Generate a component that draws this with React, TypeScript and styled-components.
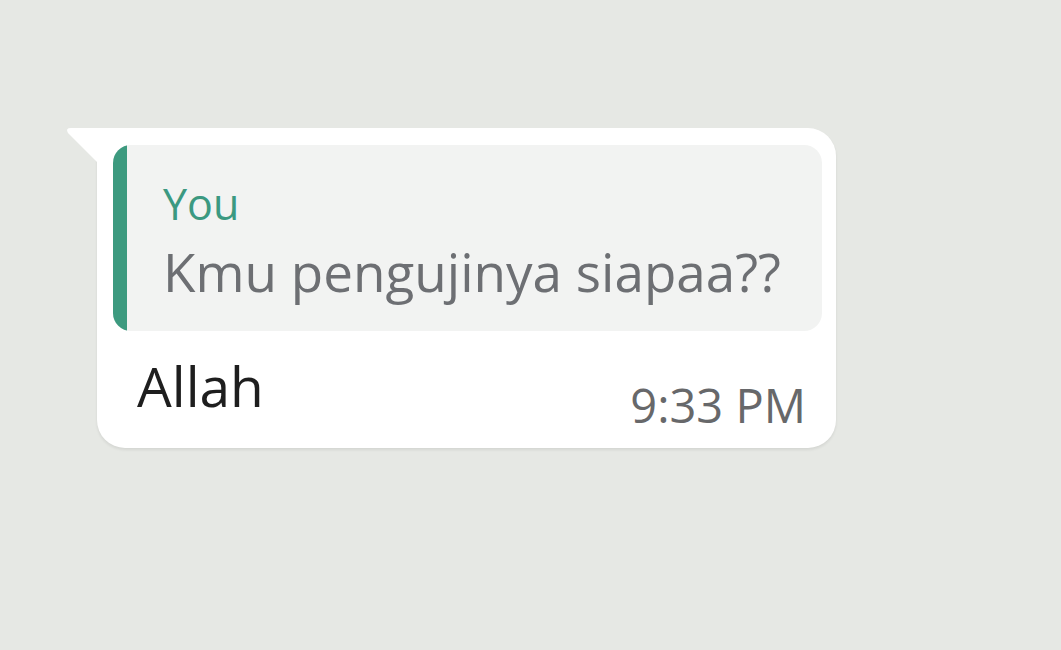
import React from "react";
import styled, { createGlobalStyle } from "styled-components";

const Global = createGlobalStyle`
  html, body { margin: 0; padding: 0; }
  body {
    background: #e6e8e4;
    font-family: "Open Sans", "Noto Sans", sans-serif;
    width: 1061px;
    height: 650px;
    overflow: hidden;
  }
`;

const Page = styled.div`
  width: 1061px;
  height: 650px;
  padding: 128px 0 0 97px;
  box-sizing: border-box;
`;

const Bubble = styled.div`
  position: relative;
  width: 739px;
  box-sizing: border-box;
  background: #ffffff;
  border-radius: 0 28px 28px 28px;
  padding: 17px 14px 15px 16px;
  box-shadow: 0 2px 3px rgba(0, 0, 0, 0.08);
`;

const Tail = styled.svg`
  position: absolute;
  left: -32px;
  top: 0;
  width: 34px;
  height: 36px;
`;

const Quote = styled.div`
  display: flex;
  background: #f2f3f2;
  border-radius: 18px;
  overflow: hidden;
  height: 186px;
`;

const Bar = styled.div`
  width: 14px;
  flex-shrink: 0;
  background: #3d9a7f;
  border-radius: 18px 0 0 18px;
`;

const QuoteBody = styled.div`
  display: flex;
  flex-direction: column;
  padding: 35px 0 0 36px;
`;

const Sender = styled.div`
  color: #3b9981;
  font-size: 43px;
  line-height: 48px;
`;

const Quoted = styled.div`
  color: #6d6f73;
  font-size: 53px;
  line-height: 60px;
  margin-top: 14px;
  white-space: nowrap;
`;

const Footer = styled.div`
  display: flex;
  justify-content: space-between;
  align-items: flex-start;
  padding: 23px 16px 0 24px;
`;

const Message = styled.div`
  color: #1e1e1e;
  font-size: 55px;
  line-height: 64px;
`;

const Time = styled.div`
  color: #67686a;
  font-size: 47px;
  line-height: 56px;
  margin-top: 23px;
`;

export default function App() {
  return (
    <>
      <Global />
      <Page>
        <Bubble>
          <Tail viewBox="0 0 34 36">
            <path d="M34 0 L6 0 Q0 0 3 5 L34 36 Z" fill="#ffffff" />
          </Tail>
          <Quote>
            <Bar />
            <QuoteBody>
              <Sender>You</Sender>
              <Quoted>Kmu pengujinya siapaa??</Quoted>
            </QuoteBody>
          </Quote>
          <Footer>
            <Message>Allah</Message>
            <Time>9:33 PM</Time>
          </Footer>
        </Bubble>
      </Page>
    </>
  );
}
